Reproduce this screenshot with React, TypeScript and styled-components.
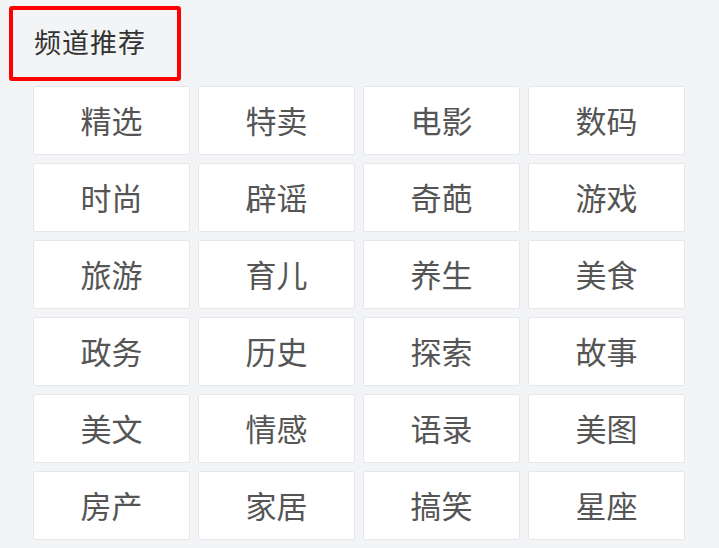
import React from "react";
import styled, { createGlobalStyle } from "styled-components";

const GlobalStyle = createGlobalStyle`
  html, body {
    margin: 0;
    padding: 0;
    background: #f3f4f6;
  }
  body {
    font-family: "Noto Sans CJK SC", "Noto Sans", sans-serif;
  }
`;

const Page = styled.div`
  width: 719px;
  height: 548px;
  overflow: hidden;
  background: #f3f4f6;
  display: flex;
  flex-direction: column;
`;

const Header = styled.div`
  box-sizing: border-box;
  flex-shrink: 0;
  margin: 6px 0 0 9px;
  width: 172px;
  height: 75px;
  border: 4px solid #ff0000;
  border-radius: 3px;
  padding: 0 0 5px 21px;
  display: flex;
  align-items: center;
  font-size: 27px;
  color: #333333;
  letter-spacing: 1px;
`;

const Grid = styled.div`
  flex-shrink: 0;
  margin: 5px 0 0 33px;
  display: grid;
  grid-template-columns: repeat(4, 157px);
  grid-auto-rows: 69px;
  column-gap: 8px;
  row-gap: 8px;
`;

const Cell = styled.div`
  box-sizing: border-box;
  background: #ffffff;
  border: 1px solid #e6e7ea;
  border-radius: 2px;
  display: flex;
  align-items: center;
  justify-content: center;
  font-size: 31px;
  color: #555555;
  padding-bottom: 2px;
`;

const channels = [
  "精选", "特卖", "电影", "数码",
  "时尚", "辟谣", "奇葩", "游戏",
  "旅游", "育儿", "养生", "美食",
  "政务", "历史", "探索", "故事",
  "美文", "情感", "语录", "美图",
  "房产", "家居", "搞笑", "星座",
  "", "", "", "",
];

export default function App() {
  return (
    <>
      <GlobalStyle />
      <Page>
        <Header>频道推荐</Header>
        <Grid>
          {channels.map((c, i) => (
            <Cell key={i}>{c}</Cell>
          ))}
        </Grid>
      </Page>
    </>
  );
}
